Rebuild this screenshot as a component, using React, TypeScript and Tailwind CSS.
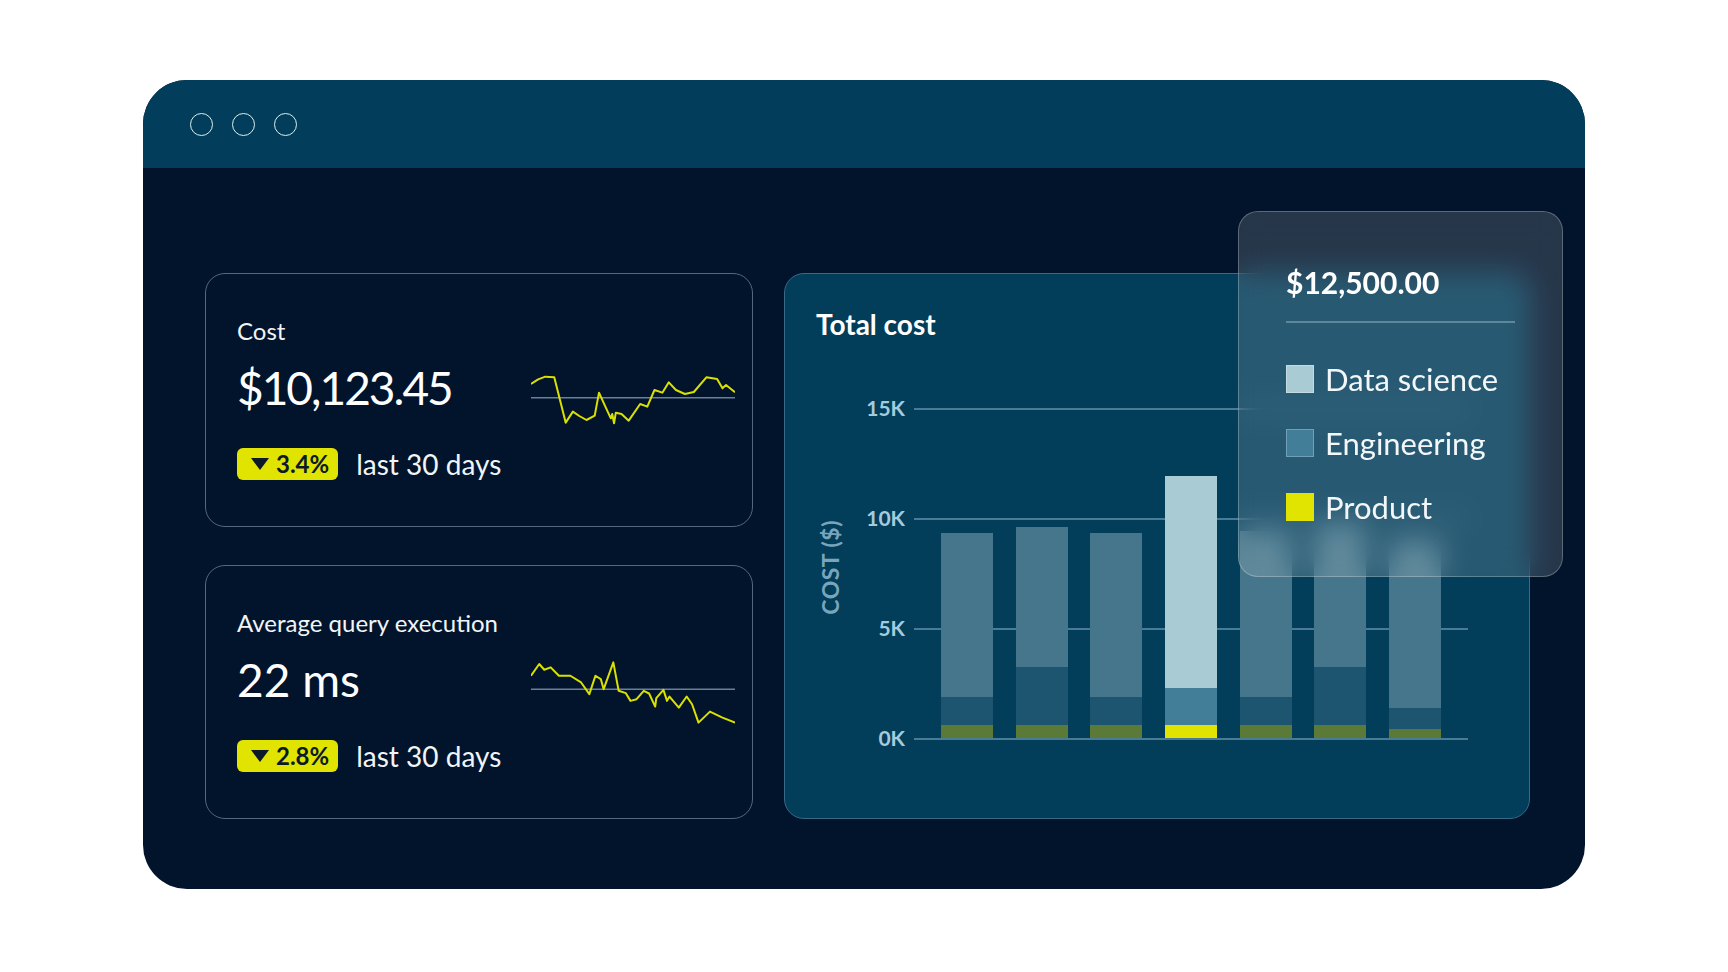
import React from "react";

const spark1 =
  "925,342 945,328 965,320 990,322 1022,458 1042,425 1060,438 1080,450 1103,437 1115,368 1135,415 1148,445 1152,432 1157,460 1162,428 1178,432 1198,452 1230,402 1250,410 1270,360 1292,368 1310,337 1330,360 1355,372 1380,366 1415,322 1445,327 1460,355 1470,345 1495,367";
const spark2 =
  "925,345 948,310 962,327 980,320 1003,345 1035,345 1065,365 1088,400 1105,345 1120,355 1128,385 1155,305 1170,390 1190,397 1203,420 1220,415 1240,390 1255,398 1272,437 1275,412 1295,387 1305,420 1312,407 1338,440 1360,407 1375,430 1393,485 1425,452 1460,470 1495,485";

function Sparkline({ points, vb, base, h }: { points: string; vb: string; base: number; h: number }) {
  return (
    <svg width={204} height={h} viewBox={vb} preserveAspectRatio="none" className="shrink-0">
      <line x1={925} x2={1495} y1={base} y2={base} stroke="#6b7f95" strokeWidth={1.5} vectorEffect="non-scaling-stroke" />
      <polyline
        points={points}
        fill="none"
        stroke="#dbe000"
        strokeWidth={2}
        strokeLinejoin="round"
        vectorEffect="non-scaling-stroke"
      />
    </svg>
  );
}

function StatCard({
  label,
  value,
  pct,
  tight,
  children,
}: {
  label: string;
  value: string;
  pct: string;
  tight?: boolean;
  children: React.ReactNode;
}) {
  return (
    <div className="h-[254px] rounded-[20px] border-[1.5px] border-[#55677e] flex items-center pl-[31px] pr-[17px]">
      <div className="flex flex-col mb-[4px]">
        <div className="text-[24px] leading-[28px] text-[#f1f5f8]">{label}</div>
        <div
          className={
            "mt-[15px] text-[46px] leading-[56px] text-white " + (tight ? "tracking-[-2px]" : "tracking-[0px]")
          }
        >
          {value}
        </div>
        <div className="mt-[32px] flex items-center">
          <div className="h-[32px] rounded-[6px] bg-[#e0e400] flex items-center pl-[14px] pr-[9px] gap-[7px]">
            <svg width="18" height="12" viewBox="0 0 18 12">
              <path d="M0 0 H18 L9 12 Z" fill="#0b1a29" />
            </svg>
            <span className="text-[24px] leading-[32px] font-bold text-[#0b1a29]">{pct}</span>
          </div>
          <span className="ml-[18px] text-[28px] leading-[32px] text-[#f1f5f8]">last 30 days</span>
        </div>
      </div>
      <div className="ml-auto">{children}</div>
    </div>
  );
}

type Bar = { top: number; mid: number; bot: number; hi?: boolean };
const bars: Bar[] = [
  { top: 164, mid: 28, bot: 13 },
  { top: 140, mid: 58, bot: 13 },
  { top: 164, mid: 28, bot: 13 },
  { top: 212, mid: 37, bot: 13, hi: true },
  { top: 166, mid: 28, bot: 13 },
  { top: 142, mid: 58, bot: 13 },
  { top: 168, mid: 21, bot: 9 },
];

const ticks = ["15K", "10K", "5K", "0K"];

function Chart() {
  return (
    <div className="flex-1 rounded-[20px] border-[1.5px] border-[#376a86] bg-[#023d5a] pl-[31px] pt-[34px]">
      <div className="text-[28px] leading-[32px] font-bold text-white">Total cost</div>
      <div className="mt-[68px] flex">
        <div className="w-[26px] ml-[1px] h-[330px] flex items-center justify-center pb-[12px]">
          <span className="[writing-mode:vertical-lr] rotate-180 text-[23px] leading-[26px] font-bold tracking-[0.5px] text-[#79a5bc] whitespace-nowrap">
            COST ($)
          </span>
        </div>
        <div className="ml-[71px] relative w-[554px] h-[330px]">
          {ticks.map((t, i) => (
            <div
              key={t}
              className="absolute left-0 right-0 h-[1.5px] bg-[#4a7b95]"
              style={{ top: i * 110 }}
            >
              <span className="absolute right-full mr-[9px] -top-[13px] text-[21px] leading-[26px] font-bold text-[#a5cbdb]">
                {t}
              </span>
            </div>
          ))}
          <div className="absolute inset-0 flex items-end justify-between px-[27px]">
            {bars.map((b, i) => (
              <div key={i} className="w-[52px] flex flex-col">
                <div className={b.hi ? "bg-[#a8cbd4]" : "bg-[#46768b]"} style={{ height: b.top }} />
                <div className={b.hi ? "bg-[#437e98]" : "bg-[#1d5470]"} style={{ height: b.mid }} />
                <div className={b.hi ? "bg-[#e0e400]" : "bg-[#5b7a37]"} style={{ height: b.bot }} />
              </div>
            ))}
          </div>
        </div>
      </div>
    </div>
  );
}

function Tooltip() {
  return (
    <div className="absolute left-[1095px] top-[131px] w-[325px] h-[366px] rounded-[20px] border-[1.5px] border-white/25 bg-white/15 backdrop-blur-[14px] pl-[47px] pr-[47px] pt-[52px]">
      <div className="text-[30px] leading-[36px] font-bold text-white">$12,500.00</div>
      <div className="mt-[21px] h-[1.5px] bg-[#5e879c]" />
      <div className="mt-[42px] flex flex-col gap-[36px]">
        {[
          { name: "Data science", cls: "bg-[#a8cbd4] border-[#c4dde4]" },
          { name: "Engineering", cls: "bg-[#437e98] border-[#70a0b5]" },
          { name: "Product", cls: "bg-[#e0e400] border-[#e0e400]" },
        ].map((it) => (
          <div key={it.name} className="flex items-center h-[28px]">
            <div className={"w-[28px] h-[28px] border-[1.5px] " + it.cls} />
            <span className="ml-[11px] text-[31px] leading-[28px] text-[#f3f7f9]">{it.name}</span>
          </div>
        ))}
      </div>
    </div>
  );
}

export default function App() {
  return (
    <div className="w-[1728px] h-[972px] bg-white flex justify-center pt-[80px] font-['Lato',sans-serif]">
      <div className="relative w-[1442px] h-[809px] rounded-[44px] overflow-hidden bg-[#01142b] flex flex-col">
        <div className="h-[88px] shrink-0 bg-[#023e5b] flex items-center pl-[47px] gap-[19px]">
          <div className="w-[23px] h-[23px] rounded-full border-[1.5px] border-[#d9f0f3]" />
          <div className="w-[23px] h-[23px] rounded-full border-[1.5px] border-[#d9f0f3]" />
          <div className="w-[23px] h-[23px] rounded-full border-[1.5px] border-[#d9f0f3]" />
        </div>
        <div className="flex-1 flex pl-[62px] pr-[55px] pt-[105px] pb-[71px] gap-[31px]">
          <div className="w-[548px] flex flex-col gap-[38px]">
            <StatCard label="Cost" value="$10,123.45" pct="3.4%" tight>
              <Sparkline points={spark1} vb="925 300 570 180" base={383} h={60} />
            </StatCard>
            <StatCard label="Average query execution" value="22 ms" pct="2.8%">
              <Sparkline points={spark2} vb="925 295 570 200" base={385} h={67} />
            </StatCard>
          </div>
          <Chart />
        </div>
        <Tooltip />
      </div>
    </div>
  );
}
